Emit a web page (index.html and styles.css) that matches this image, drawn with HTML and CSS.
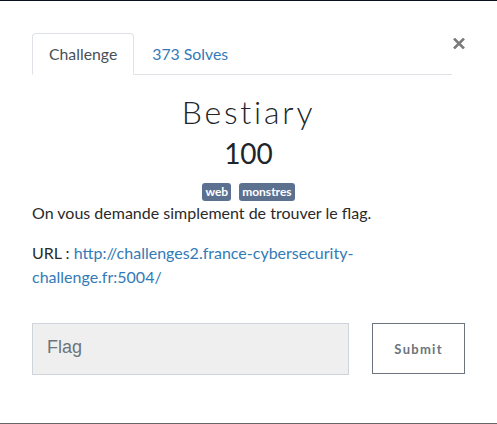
FILE: index.html
```html
<!DOCTYPE html>
<html>
<head>
<meta charset="utf-8">
<link rel="stylesheet" href="styles.css">
</head>
<body>
<div class="modal">
  <div class="head">
    <ul class="tabs">
      <li class="tab active">Challenge</li>
      <li class="tab link">373 Solves</li>
    </ul>
    <span class="close"><svg width="12" height="11" viewBox="0 0 12 11"><path d="M1 0.5 L11 10.5 M11 0.5 L1 10.5" stroke="#7b7b7b" stroke-width="2.6" stroke-linecap="butt"/></svg></span>
  </div>
  <h2 class="title">Bestiary</h2>
  <h3 class="value">100</h3>
  <div class="tags"><span class="badge">web</span><span class="badge">monstres</span></div>
  <p class="desc first">On vous demande simplement de trouver le flag.</p>
  <p class="desc">URL : <a class="url" href="#">http://challenges2.france-cybersecurity-challenge.fr:5004/</a></p>
  <div class="form">
    <input class="flag" type="text" placeholder="Flag">
    <button class="submit">Submit</button>
  </div>
</div>
</body>
</html>
```
FILE: styles.css
```css
html, body { margin: 0; padding: 0; background: #fff; }
body { width: 497px; height: 424px; overflow: hidden; }
.modal {
  box-sizing: border-box;
  height: 424px;
  border-top: 1px solid #0b111c;
  border-bottom: 1px solid #666;
  padding: 32px 32px 0 32px;
  font-family: Lato, "Noto Sans", sans-serif;
  color: #212529;
}
.head { display: flex; align-items: flex-start; }
.tabs {
  list-style: none; margin: 0; padding: 0;
  display: flex; flex: none; width: 420px;
  border-bottom: 1px solid #dee2e6;
}
.tab {
  font-size: 15.8px; line-height: 24px;
  padding: 8px 16px;
  border: 1px solid transparent;
  border-radius: 4px 4px 0 0;
  margin-bottom: -1px;
}
.tab.active { color: #495057; border-color: #dee2e6 #dee2e6 #fff; }
.tab.link { color: #337ab7; padding-left: 17px; }
.close { margin-left: 1px; margin-top: 5px; display: block; line-height: 0; }
.title {
  margin: 17px 0 0; text-align: center;
  font-size: 32px; font-weight: 300; line-height: 40px;
  letter-spacing: 2.8px; color: #212529;
}
.value {
  margin: 3px 0 0; text-align: center;
  font-size: 28px; font-weight: 400; line-height: 36px;
}
.tags { display: flex; justify-content: center; gap: 8px; margin-top: 12px; }
.badge {
  background: #5c7090; color: #fff;
  font-size: 12px; font-weight: 700; line-height: 14px;
  padding: 2px 3px; border-radius: 3px;
}
.desc { margin: 0 0 16px; font-size: 16px; line-height: 24px; color: #2a2a2a; }
.desc.first { margin-top: 0; }
.url { color: #337ab7; text-decoration: none; }
.form { display: flex; margin-top: 34px; gap: 23px; align-items: flex-start; }
.flag {
  box-sizing: border-box; width: 318px; height: 52px;
  background: #efefef; border: 1px solid #ced4da;
  padding: 0 0 3px 14px; font-size: 18px;
  font-family: "Liberation Sans", Arial, sans-serif; color: #555;
}
.flag::placeholder { color: #6c757d; }
.submit {
  box-sizing: border-box; width: 93px; height: 51px;
  background: #fff; border: 1px solid #6c757d;
  color: #6c757d; font-family: Lato, sans-serif;
  font-size: 13px; font-weight: 700; letter-spacing: 1.3px;
}
```
